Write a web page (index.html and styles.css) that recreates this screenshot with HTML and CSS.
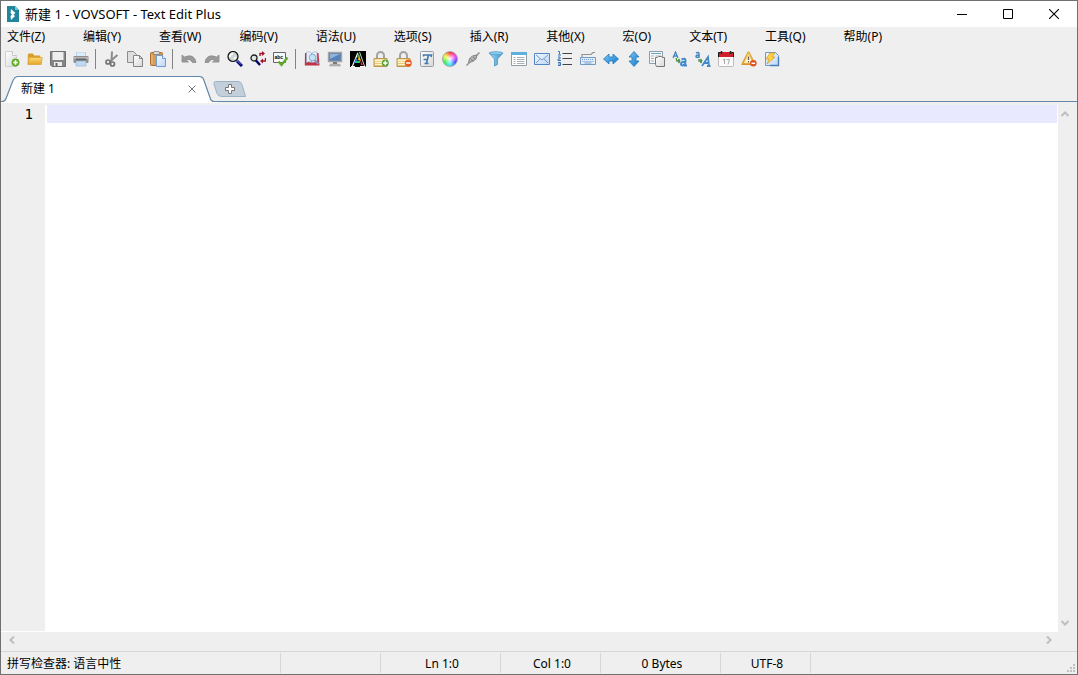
FILE: index.html
```html
<!DOCTYPE html>
<html lang="zh-CN">
  <head>
    <meta charset="utf-8">
    <title>新建 1 - VOVSOFT - Text Edit Plus</title>
    <link rel="stylesheet" href="styles.css">
  </head>
  <body>
    <div class="window">
      <header class="title-bar">
        <svg class="app-icon" width="16" height="16" viewBox="0 0 16 16">
          <path d="M2 0h8l4 4v12H2z" fill="#21869b"/>
          <path d="M10 0l4 4h-4z" fill="#75c4d1"/>
          <path d="M6 3l4.500 4-2 1.500L10 10l-4 4-.5-4L7 8.500 5.500 7z" fill="#fff"/>
        </svg>
        <h1 class="title">新建 1 - VOVSOFT - Text Edit Plus</h1>
        <div class="window-buttons">
          <button aria-label="最小化"><svg width="10" height="10" viewBox="0 0 10 10"><path d="M0 5.500h10" stroke="#000"/></svg></button>
          <button aria-label="最大化"><svg width="10" height="10" viewBox="0 0 10 10"><path d="M.5.5h9v9h-9z" fill="none" stroke="#000"/></svg></button>
          <button aria-label="关闭"><svg width="10" height="10" viewBox="0 0 10 10"><path d="M0 0l10 10M10 0L0 10" stroke="#000" stroke-width="1.100"/></svg></button>
        </div>
      </header>

      <nav class="menu">
        <button>文件(Z)</button>
        <button>编辑(Y)</button>
        <button>查看(W)</button>
        <button>编码(V)</button>
        <button>语法(U)</button>
        <button>选项(S)</button>
        <button>插入(R)</button>
        <button>其他(X)</button>
        <button>宏(O)</button>
        <button>文本(T)</button>
        <button>工具(Q)</button>
        <button>帮助(P)</button>
      </nav>

      <svg width="0" height="0" class="defs">
        <defs>
          <linearGradient id="gold" x2="0" y2="1"><stop stop-color="#fbd978"/><stop offset="1" stop-color="#e3a528"/></linearGradient>
          <linearGradient id="brass" x2="0" y2="1"><stop stop-color="#fbe6a6"/><stop offset="1" stop-color="#dcb968"/></linearGradient>
          <linearGradient id="blue" x2="1" y2="1"><stop stop-color="#7cc8f4"/><stop offset="1" stop-color="#1478cc"/></linearGradient>
          <linearGradient id="funnel" x2="1"><stop stop-color="#a5daf2"/><stop offset="1" stop-color="#3a93cb"/></linearGradient>
          <linearGradient id="paper" x2="1" y2="1"><stop stop-color="#fff"/><stop offset="1" stop-color="#d8d8d8"/></linearGradient>
          <linearGradient id="sky" x2="1" y2="1"><stop stop-color="#f5faff"/><stop offset="1" stop-color="#bcd5f5"/></linearGradient>
        </defs>
      </svg>

      <div class="toolbar">
        <button aria-label="新建"><svg viewBox="0 0 16 16"><path d="M1.500.5h7l4 4v11h-11z" fill="url(#paper)" stroke="#cfcfcf"/><path d="M8.500.5v4h4" fill="#fff" stroke="#c5c5c5"/><circle cx="11.500" cy="11.500" r="3.700" fill="#6bb52c" stroke="#4b9714" stroke-width=".6"/><path d="M11.500 9.300v4.400M9.300 11.500h4.400" stroke="#fff" stroke-width="1.500"/></svg></button>
        <button aria-label="打开"><svg viewBox="0 0 16 16"><path d="M.8 13V3.500l1-1h4l1.500 2h6v3z" fill="#d99f2d"/><path d="M.8 13.500l1.400-7h13l-1 7z" fill="url(#gold)" stroke="#dba637" stroke-width=".8"/></svg></button>
        <button aria-label="保存"><svg viewBox="0 0 16 16"><path d="M.5.5h15v15H2l-1.500-1.500z" fill="#858585" stroke="#707070"/><path d="M2.500 1h11v8h-11z" fill="#eee"/><path d="M4 11h8v4H4z" fill="#ececec"/><path d="M5.500 12h2v3h-2z" fill="#666"/></svg></button>
        <button aria-label="打印"><svg viewBox="0 0 16 16"><path d="M3 1h10v6H3z" fill="#b4d0ea"/><path d="M4 1.500h8v4H4z" fill="#dcecfa"/><rect x=".5" y="5" width="15" height="7" rx="1" fill="#8f8f8f"/><path d="M1 6h14v2H1z" fill="#b7b7b7"/><path d="M3 7.500h10v2H3z" fill="#666"/><path d="M3 10h10v5H3z" fill="#bfdaf2" stroke="#8ab0d2" stroke-width=".6"/></svg></button>
        <span class="separator"></span>
        <button aria-label="剪切"><svg viewBox="0 0 16 16"><path d="M8 .5L7.500 10M13.500 4L6 10.500" stroke="#8c8c8c" stroke-width="2"/><circle cx="4" cy="11" r="2" fill="none" stroke="#757575" stroke-width="1.700"/><circle cx="8.500" cy="13" r="2" fill="none" stroke="#757575" stroke-width="1.700"/></svg></button>
        <button aria-label="复制"><svg viewBox="0 0 16 16"><path d="M.5.5h6l3 3v8h-9z" fill="#dedede" stroke="#8c8c8c"/><path d="M6.500 4.500h6l3 3v8h-9z" fill="url(#paper)" stroke="#848484"/><path d="M12.500 4.500v3h3" fill="none" stroke="#848484"/></svg></button>
        <button aria-label="粘贴"><svg viewBox="0 0 16 16"><rect x=".5" y="1.500" width="12" height="13" rx="1" fill="#d89a4e" stroke="#ad6f2d"/><path d="M2 3v10" stroke="#f0c58a"/><path d="M4 .5h5l1 3H3z" fill="#ddd" stroke="#777" stroke-width=".7"/><path d="M6.500 4.500h6l3 3v8h-9z" fill="url(#sky)" stroke="#6e9bd2"/><path d="M12.500 4.500v3h3" fill="#fff" stroke="#6e9bd2"/></svg></button>
        <span class="separator"></span>
        <button aria-label="撤销"><svg viewBox="0 0 16 16"><path d="M1 4v7h6.500L5.300 9q3.500-2 6.200 2.500H15Q13.500 2 3.500 6z" fill="#9a9a9a" stroke="#8a8a8a" stroke-width=".8"/></svg></button>
        <button aria-label="重做"><svg viewBox="0 0 16 16"><path d="M15 4v7H8.500l2.200-2Q7.200 7 4.500 11.500H1Q2.500 2 12.500 6z" fill="#9a9a9a" stroke="#8a8a8a" stroke-width=".8"/></svg></button>
        <button aria-label="查找"><svg viewBox="0 0 16 16"><path d="M10 10l5 5" stroke="#000070" stroke-width="3"/><path d="M10 9.500l4 4" stroke="#6c83ed"/><circle cx="6" cy="5.500" r="5" fill="#cdd9d8" stroke="#111" stroke-width="1.200"/><path d="M3 6q0-3 3-3M7 8l2-2" fill="none" stroke="#fff" stroke-width="1.500"/></svg></button>
        <button aria-label="替换"><svg viewBox="0 0 16 16"><circle cx="4" cy="7" r="3" fill="#dce8e8" stroke="#222" stroke-width="1.300"/><path d="M6 9.500l4 4.500" stroke="#000078" stroke-width="2.500"/><path d="M10 5V2.500h3M15.500 7v3h-4" fill="none" stroke="#a3132c" stroke-width="1.400"/><path d="M12 0l3 2.500-3 2.500zM13 7.500l-3 2.500 3 2.500z" fill="#a3132c"/></svg></button>
        <button aria-label="拼写检查"><svg viewBox="0 0 16 16"><path d="M.5 1.500h12v10H.5z" fill="#f7f7f7" stroke="#666"/><text x="1.500" y="8" class="abc">abc</text><path d="M5.500 10.500l3 3.500 6-7.500" fill="none" stroke="#61a82c" stroke-width="2.300"/></svg></button>
        <span class="separator"></span>
        <button aria-label="字典"><svg viewBox="0 0 16 16"><path d="M1 2h13.500l1 12.500H.8z" fill="#c03246"/><path d="M2.500 1q3-1 5 1v9.500Q5 10 2.500 11.500zM8 2q3-2 5-1v10.500q-2.500-1-5 0z" fill="#e6eef9" stroke="#9aaaca" stroke-width=".6"/><path d="M10.500 9l4 4" stroke="#8092b5" stroke-width="2"/><circle cx="8.500" cy="6.500" r="3.300" fill="#c4e5f8" stroke="#8ba9cd"/></svg></button>
        <button aria-label="屏幕"><svg viewBox="0 0 16 16"><path d="M1.500 1.500h13v9h-13z" fill="#5681b6" stroke="#a5a5a5" stroke-width="1.400"/><path d="M3 3h10L3 8z" fill="#91b5da"/><path d="M6 11h4v2H6z" fill="#777"/><path d="M3.500 13h9l1 2h-11z" fill="#bbb" stroke="#888" stroke-width=".5"/></svg></button>
        <button aria-label="颜色高亮"><svg viewBox="0 0 16 16"><path d="M0 0h16v16H0z" fill="#000"/><path d="M1 15.500h4M2.500 15L8 1.500M10 15.500h5.500" stroke="#fff" stroke-width="1.200"/><path d="M7.500 1h2l5 14h-3z" fill="#000"/><path d="M9.500 1l5 14" stroke="#fff" stroke-width=".8"/><path d="M8 2l2 3-3 2z" fill="#39a94b"/><path d="M9 4l2 6-3-1z" fill="#e1d900"/><path d="M6 7l2 2-3 3H4z" fill="#236bd8"/><path d="M10 8l3 6h-2z" fill="#e52c25"/><path d="M5 10h5v2H5z" fill="#22c66b"/></svg></button>
        <button aria-label="加密"><svg viewBox="0 0 16 16"><path d="M4 8V4.500a3.500 3.500 0 017 0V8" fill="none" stroke="#a3a3a3" stroke-width="2"/><path d="M1 7.500h13v8H1z" fill="url(#brass)" stroke="#b99a54"/><path d="M2 9.500h11M2 11.500h7M2 13.500h7" stroke="#fff3c9"/><circle cx="12.300" cy="12" r="3.500" fill="#58a136"/><path d="M12.300 9.800v4.400M10.100 12h4.400" stroke="#fff" stroke-width="1.500"/></svg></button>
        <button aria-label="解密"><svg viewBox="0 0 16 16"><path d="M4 8V4.500a3.500 3.500 0 017 0V8" fill="none" stroke="#a3a3a3" stroke-width="2"/><path d="M1 7.500h13v8H1z" fill="url(#brass)" stroke="#b99a54"/><path d="M2 9.500h11M2 11.500h7M2 13.500h7" stroke="#fff3c9"/><circle cx="12.300" cy="12" r="3.500" fill="#e85c20"/><path d="M10.100 12h4.400" stroke="#fff" stroke-width="1.500"/></svg></button>
        <button aria-label="字体"><svg viewBox="0 0 16 16"><rect x="1.500" y=".5" width="13" height="15" rx="1" fill="url(#paper)" stroke="#969eaa"/><path d="M4.500 5.500V4h8L12 6M9.500 4L7.500 12M5.500 12.500h4M4.500 8.500h3" fill="none" stroke="#4478b0" stroke-width="1.600"/></svg></button>
        <button aria-label="颜色"><span class="color-wheel"></span></button>
        <button aria-label="链接"><svg viewBox="0 0 16 16"><path d="M1.500 14.500l4-4M10.500 5.500l4-4" stroke="#999" stroke-width="1.700"/><path d="M3.500 11.500l1-4 3-2.500 4.500-1-1 4-3.500 2.500z" fill="#b5b5b5" stroke="#858585"/><path d="M5.500 8l3 2M8 6l2.500 2" stroke="#777"/></svg></button>
        <button aria-label="筛选"><svg viewBox="0 0 16 16"><path d="M1.200 2L6.500 8v7l3-1.500V8L15 2z" fill="url(#funnel)" stroke="#4796c7" stroke-width=".8"/><ellipse cx="8" cy="2.200" rx="6.800" ry="1.500" fill="#8fcbec" stroke="#4d9dcd" stroke-width=".8"/></svg></button>
        <button aria-label="列表"><svg viewBox="0 0 16 16"><path d="M.5 1.500h15v13H.5z" fill="#fff" stroke="#909da5"/><path d="M0 1h16v3H0z" fill="#5eb1dc"/><path d="M2.500 6.500h2M2.500 8.500h2M2.500 10.500h2M2.500 12.500h2M6 6.500h7.500M6 8.500h7.500M6 10.500h7.500M6 12.500h7.500" stroke="#a8b0b5"/></svg></button>
        <button aria-label="邮件"><svg viewBox="0 0 16 16"><path d="M.5 2.500h15v11H.5z" fill="url(#sky)" stroke="#5485c5"/><path d="M2 4l6 5 6-5M2 12l4-4M14 12l-4-4" fill="none" stroke="#769cce"/></svg></button>
        <button aria-label="行号"><svg viewBox="0 0 16 16"><path d="M5.500 2.500H15M5.500 7.500H15M5.500 13.500H15" stroke="#444" stroke-width="1.200"/><path d="M1 .5h1.500v3M1 4h3M1 6h2v2H1v1.500h3M1 11.500h2.500v3H1M1 13h2" fill="none" stroke="#3974b8"/></svg></button>
        <button aria-label="键盘"><svg viewBox="0 0 16 16"><path d="M2 6V3.500h9l2-2h2" fill="none" stroke="#929292" stroke-width="1.200"/><path d="M.5 6.500h15v7H.5z" fill="#e1edfb" stroke="#7398c3"/><path d="M2 8.500h12M2.500 10.500h11" stroke="#729bcd" stroke-dasharray="1 1"/><path d="M4.500 12h7" stroke="#729bcd"/></svg></button>
        <button aria-label="左右"><svg viewBox="0 0 16 16"><path d="M.5 8L6 3v3h4V3l5.500 5-5.500 5v-3H6v3z" fill="url(#blue)" stroke="#1e79b9" stroke-width=".8"/></svg></button>
        <button aria-label="上下"><svg viewBox="0 0 16 16"><path d="M8 .5l5 5.500h-3v4h3l-5 5.500L3 10h3V6H3z" fill="url(#blue)" stroke="#1e79b9" stroke-width=".8"/></svg></button>
        <button aria-label="多行"><svg viewBox="0 0 16 16"><path d="M.5.5h13v12H.5z" fill="#f8f8f8" stroke="#8b9daa"/><path d="M2 2.500h10" stroke="#65a4c7"/><path d="M2 5h3M2 7.500h3M2 10h3M6.500 5H12" stroke="#aaa"/><path d="M6.500 6.500h2l1-1h3l1 1h2v9h-8l-1-2z" fill="url(#paper)" stroke="#777"/></svg></button>
        <button aria-label="转小写"><svg viewBox="0 0 16 16"><path d="M1 7l2.500-6L6 7M2 5h3" fill="none" stroke="#4685bd" stroke-width="1.300"/><path d="M4 7l1 3h3M8 10L6.500 8M8 10l-1.500 2" fill="none" stroke="#43934b" stroke-width="1.300"/><path d="M9.500 8.500q4-2 4 1l-.5 5h2M13 11q-4-.5-4 2t4 .5" fill="none" stroke="#408acb" stroke-width="2"/></svg></button>
        <button aria-label="转大写"><svg viewBox="0 0 16 16"><path d="M1 2q3-1.500 3 1v4M4 4Q1 4 1 5.500T4 6" fill="none" stroke="#4685bd" stroke-width="1.500"/><path d="M4 8v2h3M7 10L5.500 8M7 10l-1.500 2" fill="none" stroke="#43934b" stroke-width="1.300"/><path d="M7 15l6-9 1 9M9 12h5M12 15h3.500" fill="none" stroke="#408acb" stroke-width="1.800"/></svg></button>
        <button aria-label="日期"><svg viewBox="0 0 16 16"><rect x=".5" y="1.500" width="15" height="14" rx="1" fill="#fafafa" stroke="#bbb"/><path d="M0 6V3l1.500-2h13L16 3v3z" fill="#cf202b"/><path d="M.5 6V1.500h2M15.500 6V1.500h-2" fill="none" stroke="#111"/><path d="M3.500 0v3M12.500 0v3" stroke="#222" stroke-width="1.500"/><path d="M5 9l1.500-1v5M8.500 8.500h3l-1.500 5" fill="none" stroke="#aaa"/></svg></button>
        <button aria-label="警告"><svg viewBox="0 0 16 16"><path d="M7 1L.7 13.500h13.600L8 1z" fill="url(#gold)" stroke="#d89826" stroke-linejoin="round"/><path d="M7.500 4L3 12h9z" fill="#fff4cf"/><path d="M7.500 5.500v3.500M7.500 10v1.500" stroke="#666" stroke-width="1.300"/><circle cx="12.300" cy="12.300" r="3.300" fill="#df5523"/><path d="M10.500 12.300h3.600" stroke="#fff" stroke-width="1.400"/></svg></button>
        <button aria-label="运行宏"><svg viewBox="0 0 16 16"><path d="M1.500 1.500h10l3 3v10h-13z" fill="url(#sky)" stroke="#709ac8"/><path d="M14.500 6v8.500H6" fill="none" stroke="#487fb7" stroke-width="1.400"/><path d="M6 2h5L8 6h3l-8 7 2-5H2z" fill="#ffd343" stroke="#d79a1f" stroke-width=".7"/></svg></button>
      </div>

      <div class="tabs">
        <div class="tab">
          <svg class="tab-shape" width="216" height="27" viewBox="0 0 216 27">
            <path d="M0 25.500h1q3 0 4-3l7-18q2-4 5-4h181q4 0 5 4l6 17q1 4 4 4h3V27H0z" fill="#fff"/>
            <path d="M0 25.500h1q3 0 4-3l7-18q2-4 5-4h181q4 0 5 4l6 17q1 4 4 4h3" fill="none" stroke="#6388a8" stroke-width="1.200"/>
          </svg>
          <button class="tab-name">新建 1</button>
          <button class="tab-close" aria-label="关闭标签"><svg width="8" height="8" viewBox="0 0 8 8"><path d="M.5.5l7 7M7.500.5l-7 7" stroke="#73777c"/></svg></button>
        </div>
        <button class="tab-add" aria-label="新建标签">
          <svg width="33" height="16" viewBox="0 0 33 16">
            <path d="M2.500.5H25q3 0 4 3l3.500 12H9q-4 0-5-3L1 3Q.5.500 2.500.5z" fill="#c3d0dc" stroke="#9db1c5"/>
            <path d="M15.500 3.500h3v3h3v3h-3v3h-3v-3h-3v-3h3z" fill="#fff" stroke="#777"/>
          </svg>
        </button>
      </div>

      <main class="editor">
        <div class="gutter">1</div>
        <textarea class="code" aria-label="文本" spellcheck="false"></textarea>
        <div class="scroll-v">
          <button aria-label="向上滚动"><svg width="8" height="8" viewBox="0 0 8 8"><path d="M.5 6L4 2.500 7.500 6" fill="none" stroke="#bfbfbf" stroke-width="2"/></svg></button>
          <button aria-label="向下滚动"><svg width="8" height="8" viewBox="0 0 8 8"><path d="M.5 2L4 5.500 7.500 2" fill="none" stroke="#bfbfbf" stroke-width="2"/></svg></button>
        </div>
      </main>
      <div class="scroll-h">
        <button aria-label="向左滚动"><svg width="8" height="8" viewBox="0 0 8 8"><path d="M6 .5L2.500 4 6 7.500" fill="none" stroke="#bfbfbf" stroke-width="2"/></svg></button>
        <button aria-label="向右滚动"><svg width="8" height="8" viewBox="0 0 8 8"><path d="M2 .5L5.500 4 2 7.500" fill="none" stroke="#bfbfbf" stroke-width="2"/></svg></button>
      </div>

      <footer class="status">
        <span class="cell spelling">拼写检查器: 语言中性</span>
        <span class="cell blank"></span>
        <span class="cell line">Ln 1:0</span>
        <span class="cell column">Col 1:0</span>
        <span class="cell bytes">0 Bytes</span>
        <span class="cell encoding">UTF-8</span>
        <svg class="grip" width="8" height="8" viewBox="0 0 8 8"><path d="M6 0h2v2H6zM3 3h2v2H3zM6 3h2v2H6zM0 6h2v2H0zM3 6h2v2H3zM6 6h2v2H6z" fill="#bfbfbf"/></svg>
      </footer>
    </div>
  </body>
</html>
```

FILE: styles.css
```css
* {
  box-sizing: border-box;
}
body {
  margin: 0;
  font: 12px/18px "Noto Sans", "Noto Sans CJK SC", sans-serif;
  color: #000;
}
button {
  padding: 0;
  border: 0;
  background: none;
  font: inherit;
  color: inherit;
}
svg {
  display: block;
}
.window {
  height: 100vh;
  display: flex;
  flex-direction: column;
  border: 1px solid #707070;
  background: #efefef;
}
.defs {
  position: absolute;
}

/* title bar */
.title-bar {
  height: 26px;
  flex: none;
  display: flex;
  align-items: center;
  padding-left: 4px;
  background: #fff;
}
.title {
  flex: 1;
  margin: 0 0 0 4px;
  font-size: 13px;
  font-weight: normal;
}
.window-buttons {
  display: flex;
}
.window-buttons button {
  width: 46px;
  height: 26px;
  display: flex;
  align-items: center;
  justify-content: center;
}

/* menu */
.menu {
  height: 20px;
  flex: none;
  display: flex;
  align-items: center;
  gap: 38px;
  padding-left: 6px;
  white-space: nowrap;
}

/* toolbar */
.toolbar {
  height: 29px;
  flex: none;
  display: flex;
  padding-top: 1px;
}
.toolbar button {
  width: 23px;
  height: 22px;
  display: flex;
  align-items: center;
  justify-content: center;
  padding-right: 1px;
}
.toolbar svg {
  width: 16px;
  height: 16px;
}
.separator {
  width: 8px;
  height: 20px;
  margin-top: 1px;
  background: linear-gradient(#848484, #848484) 2px 0 / 1px 100% no-repeat;
}
.abc {
  font: bold 5px "Liberation Sans", sans-serif;
}
.color-wheel {
  width: 16px;
  height: 16px;
  border: 1px solid #a8a8a8;
  border-radius: 50%;
  background: radial-gradient(#fff, transparent 65%), conic-gradient(#f33, #f3f, #44f, #3ef, #3e4, #ef3, #f33);
}

/* tabs */
.tabs {
  height: 26px;
  flex: none;
  display: flex;
  background: linear-gradient(#6388a8, #6388a8) 0 100% / 100% 1px no-repeat;
}
.tab {
  position: relative;
  width: 212px;
  display: flex;
  align-items: center;
  justify-content: space-between;
  padding: 0 17px 0 20px;
}
.tab-shape {
  position: absolute;
  top: 0;
  left: 0;
}
.tab-name,
.tab-close {
  position: relative;
}
.tab-add {
  height: 26px;
}

/* editor */
.editor {
  flex: 1;
  min-height: 0;
  display: flex;
  margin-top: 3px;
  background: #fff;
}
.gutter {
  width: 44px;
  margin-bottom: 1px;
  padding-right: 12px;
  background: #efefef;
  font: 14px/18px "DejaVu Sans Mono", monospace;
  text-align: right;
}
.code {
  flex: 1;
  margin: 0 1px 0 2px;
  padding: 0;
  border: 0;
  outline: none;
  resize: none;
  background: linear-gradient(#e8e8ff, #e8e8ff) 0 0 / 100% 18px no-repeat;
  font: 14px/18px "DejaVu Sans Mono", monospace;
}
.scroll-v {
  width: 19px;
  display: flex;
  flex-direction: column;
  justify-content: space-between;
  padding: 5px 0 5px 3px;
  background: #efefef;
}
.scroll-h {
  height: 19px;
  flex: none;
  display: flex;
  align-items: center;
  justify-content: space-between;
  padding: 0 24px 4px 7px;
}

/* status bar */
.status {
  height: 23px;
  flex: none;
  display: flex;
  border-top: 1px solid #d7d7d7;
}
.cell {
  height: 20px;
  margin-top: 1px;
  padding-left: 3px;
  border-right: 1px solid #d7d7d7;
  line-height: 22px;
  text-align: center;
}
.spelling {
  width: 280px;
  padding-left: 6px;
  text-align: left;
}
.blank,
.column {
  width: 100px;
}
.line,
.bytes {
  width: 120px;
}
.encoding {
  width: 90px;
}
.grip {
  margin: auto 2px 2px auto;
}
```
